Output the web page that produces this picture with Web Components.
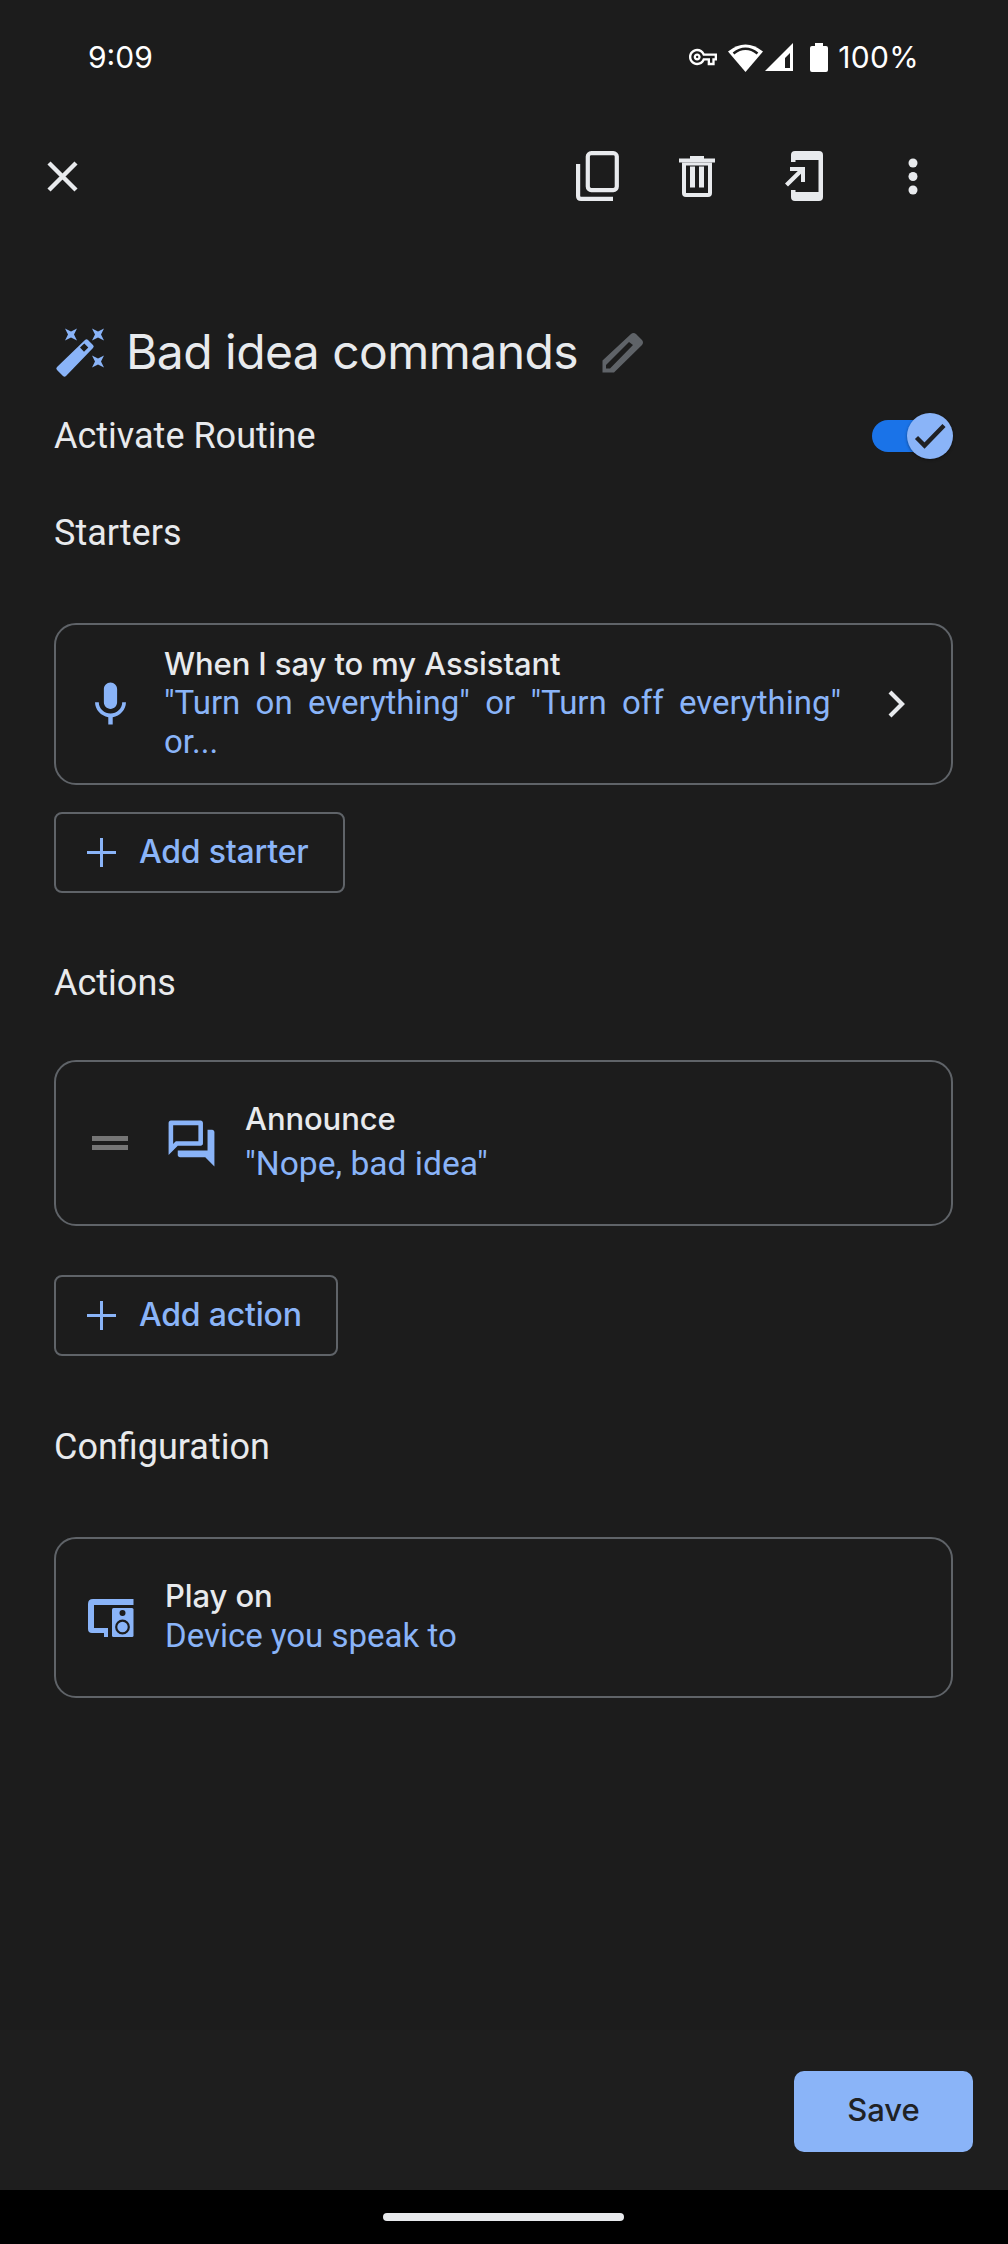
<!DOCTYPE html>
<html lang="en">
<head>
<meta charset="UTF-8">
<title>Bad idea commands</title>
<style>
  html, body { margin: 0; padding: 0; background: #1c1c1c; }
  body { font-family: "Roboto", sans-serif; color: #e8eaed; }
  routine-page { display: block; }
</style>
</head>
<body>
<routine-page>
  <status-bar></status-bar>
  <top-toolbar></top-toolbar>
  <routine-title>Bad idea commands</routine-title>
  <toggle-row>Activate Routine</toggle-row>
  <section-label style="margin-top:49px">Starters</section-label>
  <rule-card style="margin-top:66px;height:162px;--lift:3px" icon="mic" icon-left="28" text-left="108" trailing>
    <span slot="title">When I say to my Assistant</span>
    <span slot="sub">"Turn on everything" or "Turn off everything" or...</span>
  </rule-card>
  <add-button style="margin-top:27px;width:291px">Add starter</add-button>
  <section-label style="margin-top:66px">Actions</section-label>
  <rule-card style="margin-top:53px;height:166px;--line-gap:45px;--lift:5px;--sub-size:33.6px" icon="forum" icon-left="107.5" text-left="189" drag>
    <span slot="title">Announce</span>
    <span slot="sub">"Nope, bad idea"</span>
  </rule-card>
  <add-button style="margin-top:49px;width:284px">Add action</add-button>
  <section-label style="margin-top:67px">Configuration</section-label>
  <rule-card style="margin-top:66px;height:161px;--line-gap:40px;--lift:5px" icon="device" icon-left="32" text-left="109">
    <span slot="title">Play on</span>
    <span slot="sub">Device you speak to</span>
  </rule-card>
  <bottom-bar></bottom-bar>
</routine-page>

<script>
  const HEADING = '"Inter", "Noto Sans", sans-serif';

  // shared icon paths, drawn on the 24 unit material grid
  const ICONS = {
    mic: { size: [53, 53], box: '0 0 24 24', d: 'M12 14c1.66 0 2.99-1.34 2.99-3L15 5c0-1.66-1.34-3-3-3S9 3.34 9 5v6c0 1.66 1.34 3 3 3zm5.3-3c0 3-2.54 5.1-5.3 5.1S6.7 14 6.7 11H5c0 3.41 2.72 6.23 6 6.72V21h2v-3.28c3.28-.48 6-3.3 6-6.72h-1.7z' },
    forum: { size: [55, 55], box: '0 0 24 24', d: 'M15 4v7H5.17l-.59.59-.58.58V4h11m1-2H3c-.55 0-1 .45-1 1v14l4-4h10c.55 0 1-.45 1-1V3c0-.55-.45-1-1-1zm5 4h-2v9H6v2c0 .55.45 1 1 1h11l4 4V7c0-.55-.45-1-1-1z' }
  };

  class StatusBar extends HTMLElement {
    constructor() {
      super();
      this.attachShadow({ mode: 'open' }).innerHTML = `
        <style>
          :host { display: flex; align-items: center; height: 114px; padding: 0 89px 0 88px; box-sizing: border-box;
                  font: 400 30px/1 ${HEADING}; color: #fff; }
          .right { margin-left: auto; display: flex; align-items: center; }
          svg { display: block; fill: #fff; }
          .pct { margin-left: 10px; letter-spacing: .3px; }
        </style>
        <span>9:09</span>
        <div class="right">
          <svg width="28" height="28" viewBox="0 0 24 24"><path d="M22 19h-6v-4h-2.68c-1.14 2.42-3.6 4-6.32 4-3.86 0-7-3.14-7-7s3.14-7 7-7c2.72 0 5.17 1.58 6.32 4H24v6h-2v4zm-4-2h2v-4h2v-2H11.94l-.23-.67C11.01 8.34 9.11 7 7 7c-2.76 0-5 2.24-5 5s2.24 5 5 5c2.11 0 4.01-1.34 4.71-3.33l.23-.67H18v4zM7 15c-1.65 0-3-1.35-3-3s1.35-3 3-3 3 1.35 3 3-1.35 3-3 3zm0-4c-.55 0-1 .45-1 1s.45 1 1 1 1-.45 1-1-.45-1-1-1z"/></svg>
          <svg style="margin-left:11px" width="35" height="29" viewBox="0 0 35 29">
            <path d="M0 8.5Q17.5 -5.5 35 8.5L17.5 29Z"/>
            <path d="M5.5 10.5Q17.5 1 29.5 10.5" fill="none" stroke="#1c1c1c" stroke-width="2.6"/>
          </svg>
          <svg style="margin-left:2px" width="28" height="28" viewBox="0 0 28 28">
            <path fill-rule="evenodd" d="M0 28L28 0V28ZM20 15V25H25V10Z"/>
          </svg>
          <svg style="margin-left:17px" width="18" height="29" viewBox="0 0 18 29">
            <path d="M5 0H13V3H16Q18 3 18 5V27Q18 29 16 29H2Q0 29 0 27V5Q0 3 2 3H5Z"/>
          </svg>
          <span class="pct">100%</span>
        </div>`;
    }
  }

  class TopToolbar extends HTMLElement {
    constructor() {
      super();
      this.attachShadow({ mode: 'open' }).innerHTML = `
        <style>
          :host { display: flex; align-items: center; height: 124px; padding-left: 47px; color: #e8eaed; }
          svg { display: block; flex: none; }
        </style>
        <svg width="31" height="31" viewBox="0 0 31 31"><path d="M2 2L29 29M29 2L2 29" stroke="#e8eaed" stroke-width="4.4" fill="none"/></svg>
        <svg style="margin-left:498px" width="43" height="50" viewBox="0 0 43 50" fill="none" stroke="#e8eaed" stroke-width="4.2">
          <rect x="11.8" y="2.1" width="29" height="37" rx="3.5"/>
          <path d="M2.1 13V45Q2.1 47.9 5 47.9H37"/>
        </svg>
        <svg style="margin-left:60px" width="36" height="41" viewBox="0 0 36 41" fill="#e8eaed">
          <path d="M11 0H25V2.5H36V6.5H0V2.5H11Z"/>
          <path fill-rule="evenodd" d="M3 6.5H33V37Q33 41 29 41H7Q3 41 3 37ZM7 9.5V37H29V9.5Z"/>
          <rect x="11" y="10.5" width="5" height="21"/><rect x="20" y="10.5" width="5" height="21"/>
        </svg>
        <svg style="margin-left:70px" width="38" height="50" viewBox="0 0 38 50" fill="#e8eaed">
          <path d="M10 0H34Q38 0 38 4V46Q38 50 34 50H10Q6 50 6 46V39H10.5V41H33.5V9H10.5V11H6V4Q6 0 10 0Z"/>
          <path d="M5 16H20V31H16V22.8L3 35.5L0 32.5L12.8 20H5Z"/>
        </svg>
        <svg style="margin-left:85px" width="10" height="37" viewBox="0 0 10 37" fill="#e8eaed">
          <circle cx="5" cy="5" r="4.5"/><circle cx="5" cy="18.5" r="4.5"/><circle cx="5" cy="32" r="4.5"/>
        </svg>`;
    }
  }

  class RoutineTitle extends HTMLElement {
    constructor() {
      super();
      this.attachShadow({ mode: 'open' }).innerHTML = `
        <style>
          :host { display: flex; align-items: center; height: 48px; margin-top: 90px; padding-left: 56px;
                  font: 400 48px/48px ${HEADING}; color: #e8eaed; letter-spacing: -0.55px; }
          svg { display: block; flex: none; overflow: visible; }
          .text { margin-left: 23px; white-space: nowrap; }
          .pencil { margin-left: 24px; fill: #5f6368; }
        </style>
        <svg width="47" height="48" viewBox="0 0 47 48" fill="#8ab4f8">
          <path fill-rule="evenodd" d="M29 4Q30.5 2.5 32 4L37 9Q38.5 10.5 37 12L10 40Q8.500 41.500 7 40L1 34Q-.5 32.500 1 31ZM28.300 7.500L24 11.500L28 15.700L32.300 11.500Z" transform="translate(0 8)"/>
          <path d="M9 .5L15 3.500L21 .5L18 6.500L21 12.500L15 9.500L9 12.500L12 6.500Z"/>
          <path d="M36 .5L42 3.500L48 .5L45 6.500L48 12.500L42 9.500L36 12.500L39 6.500Z"/>
          <path d="M36 27.500L42 30.500L48 27.500L45 33.500L48 39.500L42 36.500L36 39.500L39 33.500Z"/>
        </svg>
        <span class="text"><slot></slot></span>
        <svg class="pencil" width="42" height="41" viewBox="0 0 42 41"><path fill-rule="evenodd" d="M.5 40.500V28.500L29 2Q31.500 0 34 2L40 8Q42 10.500 40 13L12 40.500ZM4 36.500H8L31 13L27 10L4 33Z"/></svg>`;
    }
  }

  class ToggleRow extends HTMLElement {
    constructor() {
      super();
      this.attachShadow({ mode: 'open' }).innerHTML = `
        <style>
          :host { display: flex; align-items: center; height: 48px; margin-top: 36px; padding: 0 55px 0 54px;
                  font: 400 36px/48px "Roboto", sans-serif; color: #e8eaed; }
          .switch { margin-left: auto; position: relative; width: 81px; height: 46px; }
          .track { position: absolute; left: 0; top: 7px; width: 60px; height: 32px; border-radius: 16px; background: #1a73e8; }
          .thumb { position: absolute; right: 0; top: 0; width: 46px; height: 46px; border-radius: 50%; background: #8ab4f8;
                   box-shadow: 0 1px 3px rgba(0,0,0,.4); }
          .thumb svg { display: block; }
        </style>
        <span><slot></slot></span>
        <div class="switch">
          <div class="track"></div>
          <div class="thumb">
            <svg width="46" height="46" viewBox="0 0 46 46"><path d="M9.500 24.500L17.500 32.500L37 12.500" fill="none" stroke="#202124" stroke-width="4.400"/></svg>
          </div>
        </div>`;
    }
  }

  class SectionLabel extends HTMLElement {
    constructor() {
      super();
      this.attachShadow({ mode: 'open' }).innerHTML = `
        <style>
          :host { display: block; height: 48px; padding-left: 54px; font: 400 36px/48px "Roboto", sans-serif; color: #e8eaed; }
        </style>
        <slot></slot>`;
    }
  }

  class RuleCard extends HTMLElement {
    constructor() {
      super();
      const iconLeft = this.getAttribute('icon-left');
      const textLeft = this.getAttribute('text-left');
      const name = this.getAttribute('icon');
      let icon;
      if (name === 'device') {
        icon = `<svg class="icon" width="46" height="38" viewBox="0 0 46 38" fill="#8ab4f8">
          <path d="M5 0H45.500V6H6V29H20V38H16V34H4Q0 34 0 30V5Q0 0 5 0Z"/>
          <path fill-rule="evenodd" d="M25.500 9H44Q45.500 9 45.500 10.500V36.500Q45.500 38 44 38H25.500Q24 38 24 36.500V10.500Q24 9 25.500 9Z"/>
          <circle cx="34.500" cy="14" r="3" fill="#1c1c1c"/>
          <circle cx="34.500" cy="28" r="6.300" fill="#8ab4f8" stroke="#1c1c1c" stroke-width="2.200"/>
        </svg>`;
      } else {
        const i = ICONS[name];
        icon = `<svg class="icon" width="${i.size[0]}" height="${i.size[1]}" viewBox="${i.box}" fill="#8ab4f8"><path d="${i.d}"/></svg>`;
      }
      const drag = this.hasAttribute('drag')
        ? `<div class="drag"><i></i><i></i></div>` : '';
      const chevron = this.hasAttribute('trailing')
        ? `<svg class="chev" width="20" height="28" viewBox="0 0 20 28"><path d="M3 2L15 14L3 26" fill="none" stroke="#e8eaed" stroke-width="4.200"/></svg>` : '';
      this.attachShadow({ mode: 'open' }).innerHTML = `
        <style>
          :host { display: block; width: 899px; margin-left: 54px; box-sizing: border-box;
                  border: 2px solid #5f6368; border-radius: 22px; }
          .row { display: flex; align-items: center; height: 100%; position: relative; }
          .icon { display: block; flex: none; }
          .lead { width: ${textLeft}px; flex: none; position: relative; align-self: stretch; display: flex; align-items: center; }
          .lead .icon { margin-left: ${iconLeft}px; }
          .drag { position: absolute; left: 36px; top: 50%; width: 36px; margin-top: -7px; }
          .drag i { display: block; height: 5px; background: #757575; margin-bottom: 4px; }
          .text { flex: none; width: 677px; padding-bottom: var(--lift, 0px); }
          .title { font: 500 31px/39px ${HEADING}; color: #e8eaed; letter-spacing: -0.1px; }
          .sub { font: 400 var(--sub-size, 33px)/39px "Roboto", sans-serif; color: #8ab4f8; text-align: justify; margin-top: calc(var(--line-gap, 39px) - 39px); }
          .chev { margin-left: 46px; flex: none; }
        </style>
        <div class="row">
          <div class="lead">${drag}${icon}</div>
          <div class="text">
            <div class="title"><slot name="title"></slot></div>
            <div class="sub"><slot name="sub"></slot></div>
          </div>
          ${chevron}
        </div>`;
    }
  }

  class AddButton extends HTMLElement {
    constructor() {
      super();
      this.attachShadow({ mode: 'open' }).innerHTML = `
        <style>
          :host { display: flex; align-items: center; height: 81px; margin-left: 54px; box-sizing: border-box;
                  border: 2px solid #5f6368; border-radius: 8px; padding-left: 31px;
                  font: 500 32px/1 ${HEADING}; color: #8ab4f8; letter-spacing: -0.2px; }
          svg { display: block; flex: none; margin-right: 23px; }
          span { padding-bottom: 2px; }
        </style>
        <svg width="29" height="29" viewBox="0 0 29 29"><path d="M14.500 0V29M0 14.500H29" stroke="#8ab4f8" stroke-width="3" fill="none"/></svg>
        <span><slot></slot></span>`;
    }
  }

  class BottomBar extends HTMLElement {
    constructor() {
      super();
      this.attachShadow({ mode: 'open' }).innerHTML = `
        <style>
          :host { display: block; position: absolute; left: 0; right: 0; bottom: 0; }
          .foot { height: 160px; background: #1e1e1e; display: flex; justify-content: flex-end; align-items: flex-start; padding: 41px 35px 0 0; box-sizing: border-box; }
          .save { width: 179px; height: 81px; border-radius: 10px; background: #8ab4f8; color: #202124;
                  font: 500 31px/78px ${HEADING}; text-align: center; }
          .nav { height: 54px; background: #000; display: flex; justify-content: center; padding: 23px 2px 0 0; box-sizing: border-box; }
          .pill { width: 241px; height: 8px; border-radius: 4px; background: #e8eaed; }
        </style>
        <div class="foot"><div class="save">Save</div></div>
        <div class="nav"><div class="pill"></div></div>`;
    }
  }

  class RoutinePage extends HTMLElement {
    constructor() {
      super();
      this.attachShadow({ mode: 'open' }).innerHTML = `
        <style>
          :host { display: block; position: relative; width: 1008px; height: 2244px; overflow: hidden; background: #1c1c1c; }
        </style>
        <slot></slot>`;
    }
  }

  customElements.define('status-bar', StatusBar);
  customElements.define('top-toolbar', TopToolbar);
  customElements.define('routine-title', RoutineTitle);
  customElements.define('toggle-row', ToggleRow);
  customElements.define('section-label', SectionLabel);
  customElements.define('rule-card', RuleCard);
  customElements.define('add-button', AddButton);
  customElements.define('bottom-bar', BottomBar);
  customElements.define('routine-page', RoutinePage);
</script>
</body>
</html>
